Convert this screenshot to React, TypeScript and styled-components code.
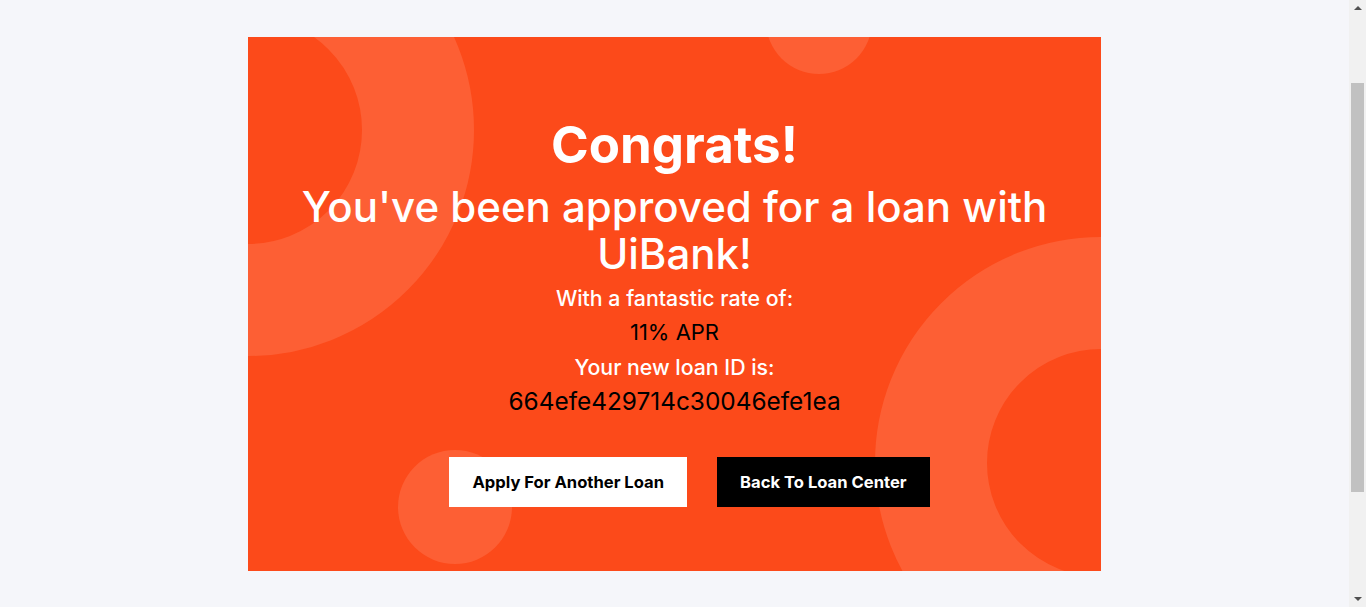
import React from "react";
import styled, { createGlobalStyle } from "styled-components";

const GlobalStyle = createGlobalStyle`
  html, body {
    margin: 0;
    padding: 0;
    background: #f5f6fa;
    font-family: "Inter", "Noto Sans", sans-serif;
    overflow: hidden;
  }
  * { box-sizing: border-box; }
`;

const Page = styled.div`
  min-height: 607px;
  padding: 37px 17px 0 0;
  display: flex;
  justify-content: center;
  align-items: flex-start;
`;

const Card = styled.section`
  position: relative;
  overflow: hidden;
  width: 853px;
  height: 534px;
  background: #fc4a1a;
  padding-top: 78px;
  display: flex;
  flex-direction: column;
  align-items: center;
  text-align: center;
`;

const Ring = styled.div<{ $x: number; $y: number }>`
  position: absolute;
  left: ${(p) => p.$x - 226}px;
  top: ${(p) => p.$y - 226}px;
  width: 452px;
  height: 452px;
  border-radius: 50%;
  border: 112px solid #fd5f34;
`;

const Dot = styled.div<{ $x: number; $y: number; $d: number }>`
  position: absolute;
  left: ${(p) => p.$x - p.$d / 2}px;
  top: ${(p) => p.$y - p.$d / 2}px;
  width: ${(p) => p.$d}px;
  height: ${(p) => p.$d}px;
  border-radius: 50%;
  background: #fd5f34;
`;

const Content = styled.div`
  position: relative;
  z-index: 1;
  display: flex;
  flex-direction: column;
  align-items: center;
`;

const Title = styled.h1`
  margin: 0;
  font-size: 51px;
  line-height: 60px;
  font-weight: 700;
  color: #ffffff;
`;

const Subtitle = styled.h2`
  margin: 8px 0 0;
  width: 800px;
  font-size: 42px;
  line-height: 47px;
  font-weight: 500;
  color: #ffffff;
`;

const Label = styled.p<{ $top: number }>`
  margin: ${(p) => p.$top}px 0 0;
  font-size: 21.3px;
  line-height: 34px;
  font-weight: 500;
  color: #ffffff;
`;

const Value = styled.p<{ $size: number }>`
  margin: 0;
  font-size: ${(p) => p.$size}px;
  line-height: 34px;
  font-weight: 400;
  color: #000000;
`;

const Actions = styled.div`
  margin: 39px 0 0 30px;
  display: flex;
  gap: 30px;
`;

const Button = styled.button<{ $dark?: boolean }>`
  height: 50px;
  padding: 0 23px;
  border: none;
  border-radius: 0;
  background: ${(p) => (p.$dark ? "#000000" : "#ffffff")};
  color: ${(p) => (p.$dark ? "#ffffff" : "#000000")};
  font-family: "Inter", "Noto Sans", sans-serif;
  font-size: 16.6px;
  font-weight: 700;
  cursor: pointer;
`;

const Scrollbar = styled.div`
  position: fixed;
  top: 0;
  right: 0;
  width: 17px;
  height: 607px;
  background: #f1f1f1;
  display: flex;
  flex-direction: column;
  align-items: center;
`;

const Arrow = styled.div<{ $down?: boolean }>`
  width: 0;
  height: 0;
  margin: ${(p) => (p.$down ? "auto 0 6px" : "6px 0 0")};
  border-left: 4px solid transparent;
  border-right: 4px solid transparent;
  ${(p) =>
    p.$down
      ? "border-top: 4px solid #505050;"
      : "border-bottom: 4px solid #505050;"}
`;

const Thumb = styled.div`
  position: absolute;
  top: 83px;
  left: 2px;
  width: 13px;
  height: 409px;
  background: #c1c1c1;
`;

export default function App() {
  return (
    <>
      <GlobalStyle />
      <Page>
        <Card>
          <Ring $x={0} $y={93} />
          <Ring $x={853} $y={426} />
          <Dot $x={571} $y={-16} $d={106} />
          <Dot $x={207} $y={470} $d={114} />
          <Content>
            <Title>Congrats!</Title>
            <Subtitle>You've been approved for a loan with UiBank!</Subtitle>
            <Label $top={4}>With a fantastic rate of:</Label>
            <Value $size={22}>11% APR</Value>
            <Label $top={1}>Your new loan ID is:</Label>
            <Value $size={24.4}>664efe429714c30046efe1ea</Value>
            <Actions>
              <Button>Apply For Another Loan</Button>
              <Button $dark>Back To Loan Center</Button>
            </Actions>
          </Content>
        </Card>
      </Page>
      <Scrollbar>
        <Arrow />
        <Thumb />
        <Arrow $down />
      </Scrollbar>
    </>
  );
}
